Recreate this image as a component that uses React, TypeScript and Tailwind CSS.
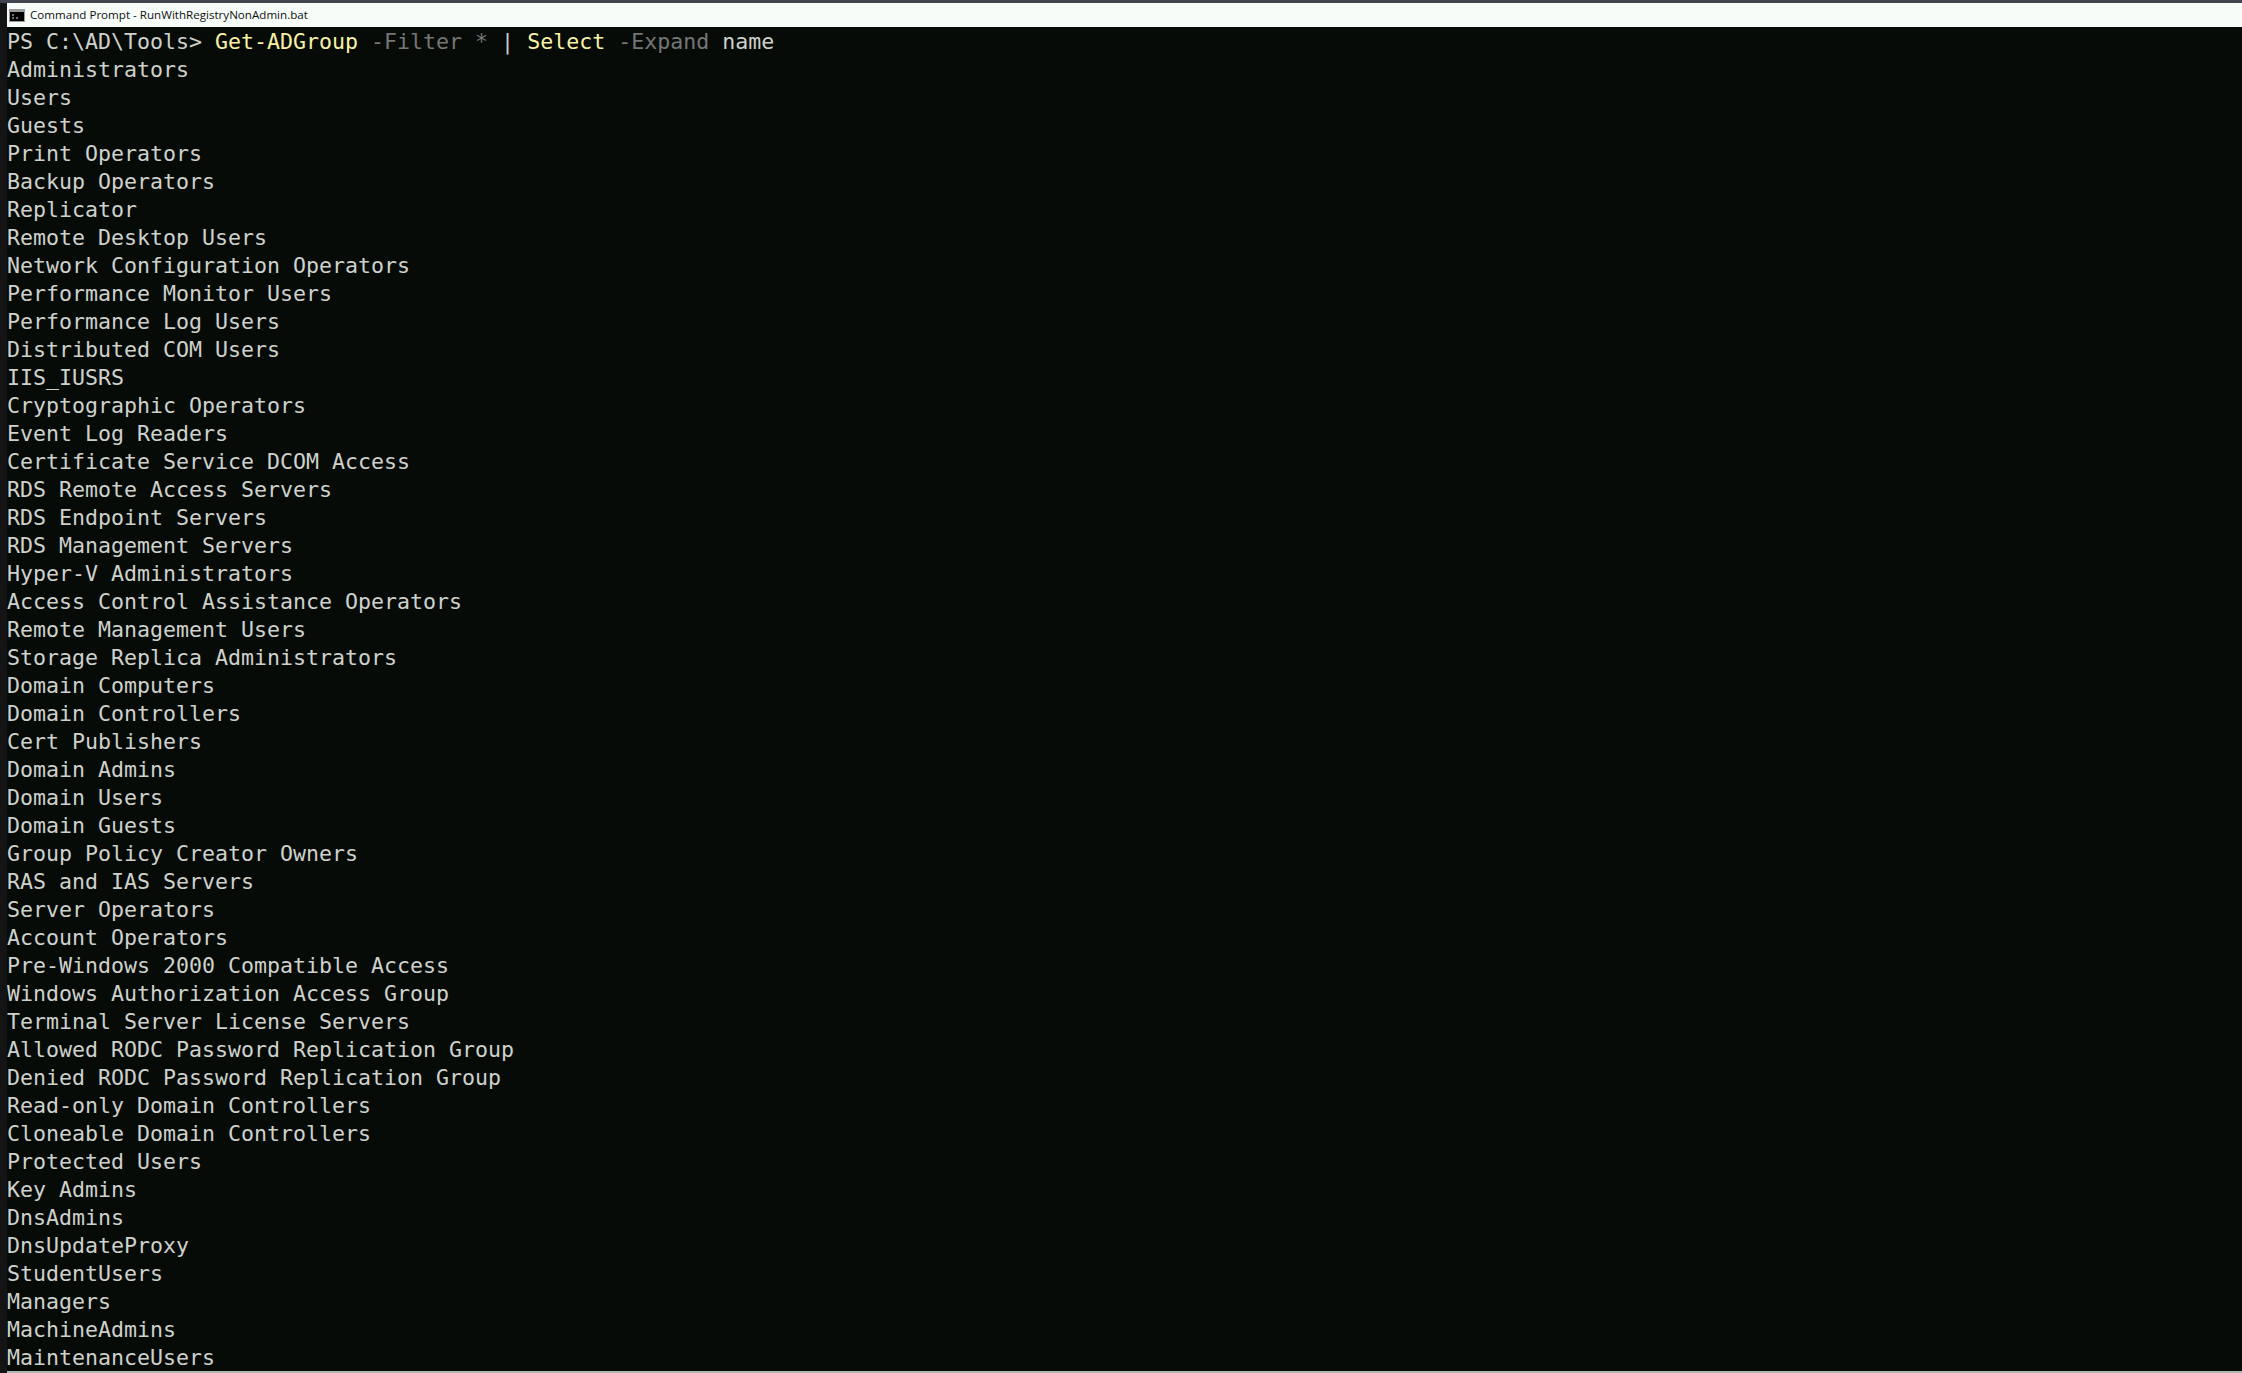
const lines = ["Administrators","Users","Guests","Print Operators","Backup Operators","Replicator","Remote Desktop Users","Network Configuration Operators","Performance Monitor Users","Performance Log Users","Distributed COM Users","IIS_IUSRS","Cryptographic Operators","Event Log Readers","Certificate Service DCOM Access","RDS Remote Access Servers","RDS Endpoint Servers","RDS Management Servers","Hyper-V Administrators","Access Control Assistance Operators","Remote Management Users","Storage Replica Administrators","Domain Computers","Domain Controllers","Cert Publishers","Domain Admins","Domain Users","Domain Guests","Group Policy Creator Owners","RAS and IAS Servers","Server Operators","Account Operators","Pre-Windows 2000 Compatible Access","Windows Authorization Access Group","Terminal Server License Servers","Allowed RODC Password Replication Group","Denied RODC Password Replication Group","Read-only Domain Controllers","Cloneable Domain Controllers","Protected Users","Key Admins","DnsAdmins","DnsUpdateProxy","StudentUsers","Managers","MachineAdmins","MaintenanceUsers"];

export default function App() {
  return (
    <div className="w-[2242px] h-[1373px] overflow-hidden flex flex-col bg-[#060b08]">
      <div className="h-[3px] shrink-0 bg-[#40444e]" />
      <div className="flex-1 min-h-0 flex border-l-[7px] border-[#141414]">
        <div className="flex-1 min-w-0 flex flex-col">
          <div className="h-[24px] shrink-0 bg-[#f6fcf8] flex items-center pl-[2px] gap-[5px] font-['Open_Sans',sans-serif] text-[11.6px] text-[#111111]">
            <svg width="16" height="13" viewBox="0 0 16 13"><rect width="16" height="13" fill="#9a9a9a" /><rect x="1" y="3" width="14" height="9" fill="#000" /><path d="M3 6h2M3 9h2M7 9h2" stroke="#ddd" /></svg>
            <span>Command Prompt - RunWithRegistryNonAdmin.bat</span>
          </div>
          <div className="flex-1 min-h-0 overflow-hidden border-b-[2px] border-[#b0b5b2] pt-[1px] font-['DejaVu_Sans_Mono',monospace] text-[21.6px] leading-[28px] text-[#cfd1cc] whitespace-pre">
            <div>PS C:\AD\Tools&gt; <span className="text-[#f9f1a5]">Get-ADGroup</span> <span className="text-[#767676]">-Filter</span> <span className="text-[#767676]">*</span> <span className="text-[#cccccc]">|</span> <span className="text-[#f9f1a5]">Select</span> <span className="text-[#767676]">-Expand</span> name</div>
            {lines.map((l) => <div key={l}>{l}</div>)}
          </div>
        </div>
      </div>
    </div>
  );
}
